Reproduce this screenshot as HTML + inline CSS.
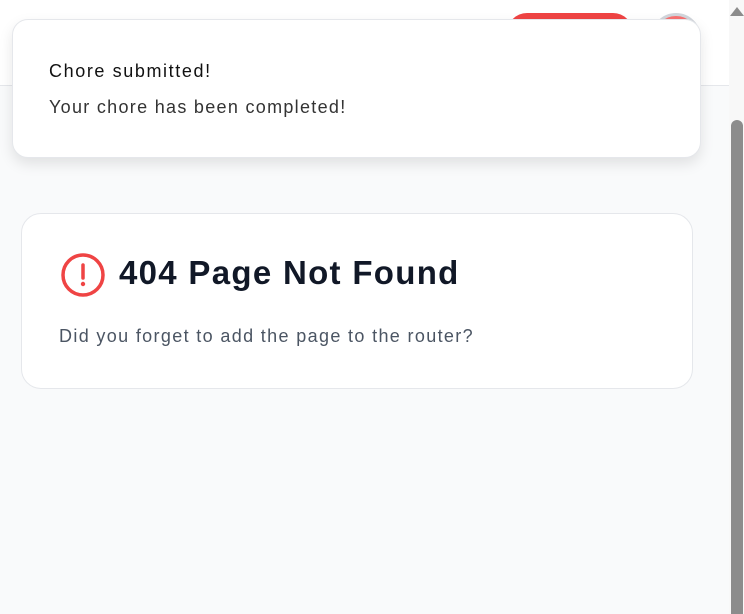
<!DOCTYPE html>
<html><head><style>
*{box-sizing:border-box;margin:0;padding:0}
body{width:744px;height:614px;overflow:hidden;background:#f9fafb;font-family:"Liberation Sans",sans-serif;position:relative}
.hdr{position:absolute;left:0;top:0;width:729px;height:86px;background:#fff;border-bottom:1px solid #e5e7eb}
.btn{position:absolute;left:507px;top:13px;width:126px;height:40px;background:#ef4444;border-radius:20px}
.av{position:absolute;left:651px;top:13px;width:50px;height:50px;border-radius:50%;background:#f87171;border:3px solid #d1d5db}
.sb{position:absolute;left:729px;top:0;width:15px;height:614px;background:#f8f8f8}
.th{position:absolute;left:731px;top:120px;width:12px;height:494px;background:#8c8c8c;border-radius:6px 6px 0 0}
.ar{position:absolute;left:730px;top:7px;width:0;height:0;border-left:7px solid transparent;border-right:7px solid transparent;border-bottom:9px solid #8c8c8c}
.toast{position:absolute;left:12px;top:19px;width:689px;height:139px;background:#fff;border-radius:16px;border:1px solid #e5e7eb;box-shadow:0 6px 14px rgba(0,0,0,.1)}
.toast .t{position:absolute;left:36px;top:41px;font-size:18px;color:#111;letter-spacing:1.6px}
.toast .d{position:absolute;left:36px;top:77px;font-size:18px;color:#333;letter-spacing:1.3px}
.card{position:absolute;left:21px;top:213px;width:672px;height:176px;background:#fff;border:1px solid #e5e7eb;border-radius:20px}
.card h1{position:absolute;left:97px;top:40px;font-size:33px;font-weight:bold;color:#111827;letter-spacing:1.3px}
.card svg{position:absolute;left:38px;top:38px}
.card p{position:absolute;left:37px;top:112px;font-size:18px;color:#4b5563;letter-spacing:1.35px}
</style></head><body>
<div class="hdr"><div class="btn"></div><div class="av"></div></div>
<div class="sb"></div><div class="ar"></div><div class="th"></div>
<div class="toast"><div class="t">Chore submitted!</div><div class="d">Your chore has been completed!</div></div>
<div class="card">
<svg width="46" height="46" viewBox="0 0 46 46"><circle cx="23" cy="23" r="20" fill="none" stroke="#ef4444" stroke-width="3.5"/><line x1="23" y1="13" x2="23" y2="26" stroke="#ef4444" stroke-width="3.5" stroke-linecap="round"/><circle cx="23" cy="32" r="2.2" fill="#ef4444"/></svg>
<h1>404 Page Not Found</h1>
<p>Did you forget to add the page to the router?</p>
</div>
</body></html>
